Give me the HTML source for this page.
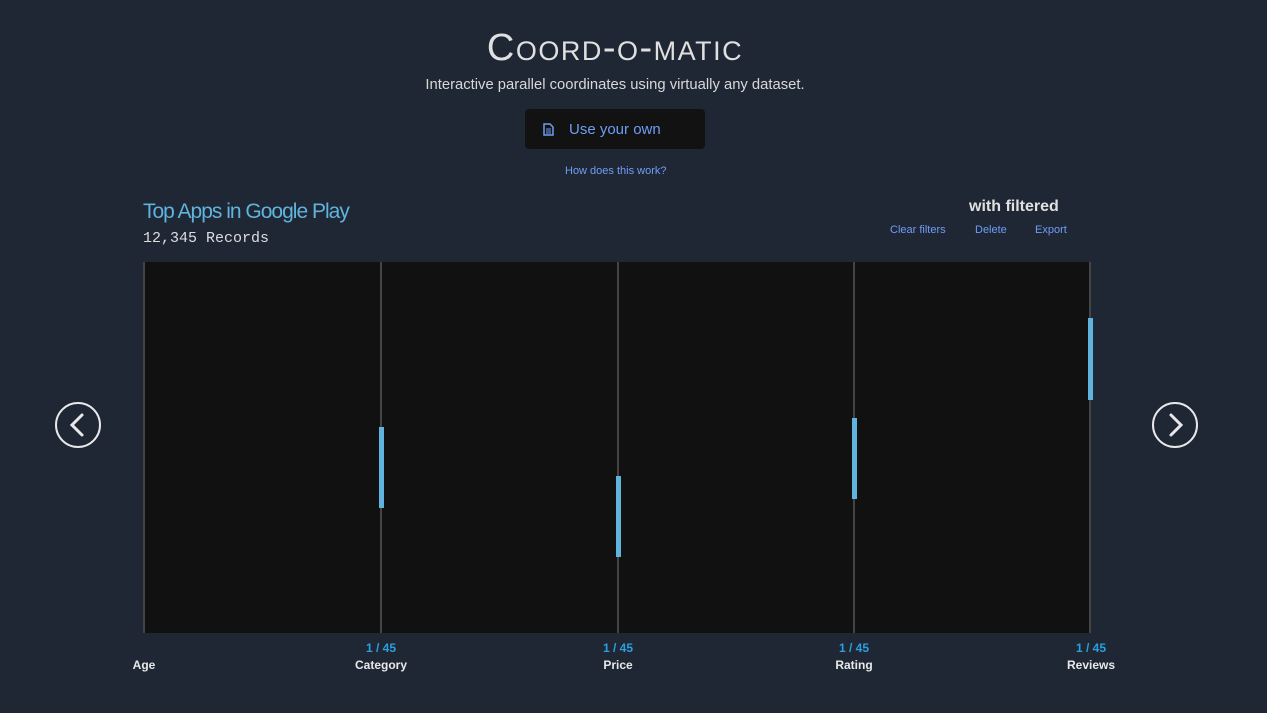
<!DOCTYPE html>
<html><head><style>
body{margin:0;width:1267px;height:713px;background:#1f2735;font-family:"Liberation Sans",sans-serif;position:relative;overflow:hidden}
.a{position:absolute}
h1{position:absolute;left:0;width:1230px;text-align:center;top:27px;margin:0;font-weight:normal;color:#e0e0e0;font-size:38px;font-variant:small-caps;letter-spacing:1.5px}
.sub{left:0;width:1230px;text-align:center;top:77px;color:#d8d8d8;font-size:14.8px}
.btn{left:525px;top:109px;width:180px;height:40px;background:#121212;border-radius:4px;color:#6f9df5;font-size:15px}
.link{color:#6f9df5;font-size:11px}
.ax{position:absolute;top:262px;width:2px;height:371px;background:#444}
.bar{position:absolute;width:5px;background:#5fb3dd}
.lab{position:absolute;top:658px;color:#e8e8e8;font-weight:bold;font-size:12px;width:100px;text-align:center}
.cnt{position:absolute;top:641px;color:#2b9fe0;font-weight:bold;font-size:12px;width:100px;text-align:center}
</style></head><body>
<h1>Coord-o-matic</h1>
<div class="a sub">Interactive parallel coordinates using virtually any dataset.</div>
<div class="a btn"><svg class="a" style="left:18px;top:14px" width="11" height="13" viewBox="0 0 11 13"><path d="M1 1h6l3 3v8H1z" fill="none" stroke="#6f9df5" stroke-width="1.5"/><path d="M3 6h5M3 8h5M3 10h5" stroke="#6f9df5"/></svg><span class="a" style="left:44px;top:12px">Use your own</span></div>
<div class="a link" style="left:565px;top:165px">How does this work?</div>
<div class="a" style="left:143px;top:200px;color:#5fb3dd;font-size:21px;letter-spacing:-1px">Top Apps in Google Play</div>
<div class="a" style="left:143px;top:230px;color:#ddd;font-size:15px;font-family:'Liberation Mono',monospace">12,345 Records</div>
<div class="a" style="left:969px;top:198px;color:#e0e0e0;font-size:16px;font-weight:bold">with filtered</div>
<div class="a link" style="left:890px;top:224px">Clear filters</div>
<div class="a link" style="left:975px;top:224px">Delete</div>
<div class="a link" style="left:1035px;top:224px">Export</div>
<div class="a" style="left:143px;top:262px;width:948px;height:371px;background:#111"></div>
<div class="ax" style="left:143px"></div><div class="ax" style="left:380px"></div><div class="ax" style="left:617px"></div><div class="ax" style="left:853px"></div><div class="ax" style="left:1089px"></div>
<div class="bar" style="left:379px;top:427px;height:81px"></div>
<div class="bar" style="left:616px;top:476px;height:81px"></div>
<div class="bar" style="left:852px;top:418px;height:81px"></div>
<div class="bar" style="left:1088px;top:318px;height:82px"></div>
<div class="cnt" style="left:331px">1 / 45</div><div class="cnt" style="left:568px">1 / 45</div><div class="cnt" style="left:804px">1 / 45</div><div class="cnt" style="left:1041px">1 / 45</div>
<div class="lab" style="left:94px">Age</div><div class="lab" style="left:331px">Category</div><div class="lab" style="left:568px">Price</div><div class="lab" style="left:804px">Rating</div><div class="lab" style="left:1041px">Reviews</div>
<svg class="a" style="left:54px;top:401px" width="48" height="48"><circle cx="24" cy="24" r="22" fill="none" stroke="#e8e8e8" stroke-width="2"/><path d="M28 14L18 24L28 34" fill="none" stroke="#e8e8e8" stroke-width="3" stroke-linecap="round"/></svg>
<svg class="a" style="left:1151px;top:401px" width="48" height="48"><circle cx="24" cy="24" r="22" fill="none" stroke="#e8e8e8" stroke-width="2"/><path d="M20 14L30 24L20 34" fill="none" stroke="#e8e8e8" stroke-width="3" stroke-linecap="round"/></svg>
</body></html>
